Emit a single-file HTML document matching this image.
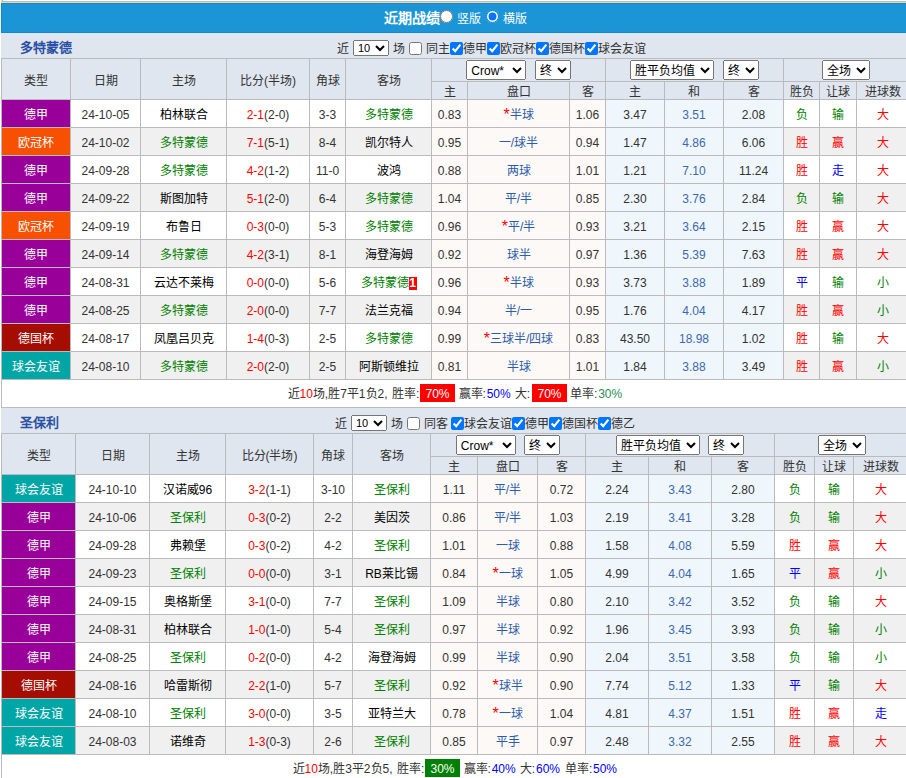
<!DOCTYPE html>
<html lang="zh-CN">
<head>
<meta charset="utf-8">
<title>近期战绩</title>
<style>
html,body{margin:0;padding:0;background:#fff;}
body{font-family:"Liberation Sans",sans-serif;font-size:12px;color:#333;}
#page{position:relative;width:906px;height:778px;overflow:hidden;background:#fff;}
#topbox{position:absolute;left:2px;top:0;width:910px;height:2px;border-left:1px solid #bbb;border-bottom:1px solid #bbb;box-sizing:border-box;background:#fff;}
#topline{position:absolute;left:1px;top:0;width:910px;height:3px;border-left:1px solid #f0d6a3;border-bottom:1px solid #f0d6a3;box-sizing:border-box;}
#bar{position:absolute;left:1px;top:3px;width:905px;height:30px;background:#1b95d6;border:1px solid #0c8bd4;border-right:0;box-sizing:border-box;color:#fff;}
#bar .ttl{position:absolute;right:466px;top:6px;font-size:14px;line-height:16px;white-space:nowrap;}
#bar input{position:absolute;margin:0;width:13px;height:13px;}
#bar .rd1{left:438px;top:6px;}
#bar .rd2{left:484px;top:6px;}
#bar span{position:absolute;top:8px;line-height:14px;white-space:nowrap;}
#bar .l1{left:455px;}
#bar .l2{left:501px;}
.band{position:absolute;left:1px;width:905px;height:25px;background:#dfe6ef;}
#band1{top:33px;}
#band2{top:408px;}
.tn{position:absolute;left:19px;top:7px;font-size:13px;line-height:15px;color:#2a50a4;white-space:nowrap;}
.ft{position:absolute;top:9px;line-height:14px;white-space:nowrap;color:#333;}
select{font-family:"Liberation Sans",sans-serif;font-size:12px;color:#000;margin:0;padding:1px 0 0 0;height:20px;box-sizing:border-box;vertical-align:middle;}
.sn{position:absolute;top:7px;width:36px;height:16px;font-size:11px;padding:0;}
.s1{width:60px;}
.s2{width:36px;margin-left:5px;}
.s3{width:84px;}
.s4{width:48px;}
.cb{position:absolute;top:9px;margin:0;width:13px;height:13px;}
.tw{position:absolute;left:1px;}
#tw1{top:58px;}
#tw2{top:433px;}
table.tb{border-collapse:separate;border-spacing:0;table-layout:fixed;border-left:1px solid #bbb;border-top:1px solid #bbb;}
.tb th,.tb td{padding:0;margin:0;border-right:1px solid #bbb;border-bottom:1px solid #bbb;text-align:center;font-weight:normal;white-space:nowrap;overflow:hidden;box-sizing:border-box;}
.tb th{background:#dfe6ef;color:#333;}
.tb tr.h1 th{height:23px;}
.tb tr.h2 th{height:18px;line-height:14px;padding-top:3px;}
.tb td{height:28px;line-height:23px;padding-top:4px;}
tr.o td{background:#fff;}
tr.e td{background:#f0f0f0;}
.tb td.p{background:#fdf9f6;}
.tb td.q{background:#f0f7fc;}
.tb td.pk{color:#2a5caa;}
.tb td.dr{color:#3c68b0;}
.tb td.ty{color:#fff;}
.tb td.t-dj{background:#990099;}
.tb td.t-og{background:#f75000;}
.tb td.t-dg{background:#a50d00;}
.tb td.t-qh{background:#00a5a5;}
.r{color:#ff0000;}
.g{color:#008000;}
.b{color:#0000ff;}
.k{color:#000;}
td.g{color:#008000;}
.rc{font-style:normal;background:#ff0000;color:#fff;font-weight:bold;padding:0;width:8px;text-align:center;line-height:13px;display:inline-block;}
.as{color:#ff0000;font-size:16px;line-height:0;vertical-align:-1px;}
.sum{position:absolute;left:1px;width:905px;height:28px;box-sizing:border-box;background:#fff;color:#333;border-left:1px solid #bbb;border-bottom:1px solid #bbb;}
#sum1{top:380px;}
#sum2{top:755px;}
.st{position:absolute;top:6px;line-height:16px;white-space:nowrap;margin-left:-1px;}
.bx{position:absolute;top:4px;color:#fff;height:18px;line-height:20px;overflow:hidden;width:35px;text-align:center;margin-left:-1px;}
.br{background:#ff0000;}
.bg{background:#008000;}
.g2{color:#2e8b57;}

</style>
</head>
<body>
<div id="page">
<div id="topbox"></div>
<div id="topline"></div>
<div id="bar"><b class="ttl">近期战绩</b><input type="radio" name="v" class="rd1"><span class="l1">竖版</span><input type="radio" name="v" class="rd2" checked><span class="l2">横版</span></div>

<div class="band" id="band1">
<b class="tn">多特蒙德</b>
<span class="ft" style="left:335.5px">近</span><select class="sn" style="left:352px"><option>10</option></select><span class="ft" style="left:392px">场</span><input type="checkbox" class="cb" style="left:408px"><span class="ft" style="left:425px">同主</span><input type="checkbox" class="cb" style="left:449px" checked><span class="ft" style="left:462px">德甲</span><input type="checkbox" class="cb" style="left:486px" checked><span class="ft" style="left:499px">欧冠杯</span><input type="checkbox" class="cb" style="left:535px" checked><span class="ft" style="left:548px">德国杯</span><input type="checkbox" class="cb" style="left:584px" checked><span class="ft" style="left:597px">球会友谊</span>
</div>
<div class="tw" id="tw1">
<table class="tb" style="width:907px">
<colgroup><col style="width:69px"><col style="width:70px"><col style="width:86px"><col style="width:83px"><col style="width:36px"><col style="width:86px"><col style="width:36px"><col style="width:102px"><col style="width:36px"><col style="width:59px"><col style="width:59px"><col style="width:60px"><col style="width:36px"><col style="width:37px"><col style="width:52px"></colgroup>
<tr class="h1"><th rowspan="2">类型</th><th rowspan="2">日期</th><th rowspan="2">主场</th><th rowspan="2">比分(半场)</th><th rowspan="2">角球</th><th rowspan="2">客场</th><th colspan="3"><select class="s1"><option>Crow*</option></select> <select class="s2"><option>终</option></select></th><th colspan="3"><select class="s3"><option>胜平负均值</option></select> <select class="s2"><option>终</option></select></th><th colspan="3"><select class="s4"><option>全场</option></select></th></tr>
<tr class="h2"><th>主</th><th>盘口</th><th>客</th><th>主</th><th>和</th><th>客</th><th>胜负</th><th>让球</th><th>进球数</th></tr>
<tr class="o"><td class="ty t-dj">德甲</td><td>24-10-05</td><td><span class="k">柏林联合</span></td><td><span class="r">2-1</span>(2-0)</td><td>3-3</td><td><span class="g">多特蒙德</span></td><td class="p">0.83</td><td class="p pk"><span class="as">*</span>半球</td><td class="p">1.06</td><td class="q">3.47</td><td class="q dr">3.51</td><td class="q">2.08</td><td class="g">负</td><td class="g">输</td><td class="r">大</td></tr>
<tr class="e"><td class="ty t-og">欧冠杯</td><td>24-10-02</td><td><span class="g">多特蒙德</span></td><td><span class="r">7-1</span>(5-1)</td><td>8-4</td><td><span class="k">凯尔特人</span></td><td class="p">0.95</td><td class="p pk">一/球半</td><td class="p">0.94</td><td class="q">1.47</td><td class="q dr">4.86</td><td class="q">6.06</td><td class="r">胜</td><td class="r">赢</td><td class="r">大</td></tr>
<tr class="o"><td class="ty t-dj">德甲</td><td>24-09-28</td><td><span class="g">多特蒙德</span></td><td><span class="r">4-2</span>(1-2)</td><td>11-0</td><td><span class="k">波鸿</span></td><td class="p">0.88</td><td class="p pk">两球</td><td class="p">1.01</td><td class="q">1.21</td><td class="q dr">7.10</td><td class="q">11.24</td><td class="r">胜</td><td class="b">走</td><td class="r">大</td></tr>
<tr class="e"><td class="ty t-dj">德甲</td><td>24-09-22</td><td><span class="k">斯图加特</span></td><td><span class="r">5-1</span>(2-0)</td><td>6-4</td><td><span class="g">多特蒙德</span></td><td class="p">1.04</td><td class="p pk">平/半</td><td class="p">0.85</td><td class="q">2.30</td><td class="q dr">3.76</td><td class="q">2.84</td><td class="g">负</td><td class="g">输</td><td class="r">大</td></tr>
<tr class="o"><td class="ty t-og">欧冠杯</td><td>24-09-19</td><td><span class="k">布鲁日</span></td><td><span class="r">0-3</span>(0-0)</td><td>5-3</td><td><span class="g">多特蒙德</span></td><td class="p">0.96</td><td class="p pk"><span class="as">*</span>平/半</td><td class="p">0.93</td><td class="q">3.21</td><td class="q dr">3.64</td><td class="q">2.15</td><td class="r">胜</td><td class="r">赢</td><td class="r">大</td></tr>
<tr class="e"><td class="ty t-dj">德甲</td><td>24-09-14</td><td><span class="g">多特蒙德</span></td><td><span class="r">4-2</span>(3-1)</td><td>8-1</td><td><span class="k">海登海姆</span></td><td class="p">0.92</td><td class="p pk">球半</td><td class="p">0.97</td><td class="q">1.36</td><td class="q dr">5.39</td><td class="q">7.63</td><td class="r">胜</td><td class="r">赢</td><td class="r">大</td></tr>
<tr class="o"><td class="ty t-dj">德甲</td><td>24-08-31</td><td><span class="k">云达不莱梅</span></td><td><span class="r">0-0</span>(0-0)</td><td>5-6</td><td><span class="g">多特蒙德</span><i class="rc">1</i></td><td class="p">0.96</td><td class="p pk"><span class="as">*</span>半球</td><td class="p">0.93</td><td class="q">3.73</td><td class="q dr">3.88</td><td class="q">1.89</td><td class="b">平</td><td class="g">输</td><td class="g">小</td></tr>
<tr class="e"><td class="ty t-dj">德甲</td><td>24-08-25</td><td><span class="g">多特蒙德</span></td><td><span class="r">2-0</span>(0-0)</td><td>7-7</td><td><span class="k">法兰克福</span></td><td class="p">0.94</td><td class="p pk">半/一</td><td class="p">0.95</td><td class="q">1.76</td><td class="q dr">4.04</td><td class="q">4.17</td><td class="r">胜</td><td class="r">赢</td><td class="g">小</td></tr>
<tr class="o"><td class="ty t-dg">德国杯</td><td>24-08-17</td><td><span class="k">凤凰吕贝克</span></td><td><span class="r">1-4</span>(0-3)</td><td>2-5</td><td><span class="g">多特蒙德</span></td><td class="p">0.99</td><td class="p pk"><span class="as">*</span>三球半/四球</td><td class="p">0.83</td><td class="q">43.50</td><td class="q dr">18.98</td><td class="q">1.02</td><td class="r">胜</td><td class="g">输</td><td class="r">大</td></tr>
<tr class="e"><td class="ty t-qh">球会友谊</td><td>24-08-10</td><td><span class="g">多特蒙德</span></td><td><span class="r">2-0</span>(2-0)</td><td>2-5</td><td><span class="k">阿斯顿维拉</span></td><td class="p">0.81</td><td class="p pk">半球</td><td class="p">1.01</td><td class="q">1.84</td><td class="q dr">3.88</td><td class="q">3.49</td><td class="r">胜</td><td class="r">赢</td><td class="g">小</td></tr>
</table>
</div>
<div class="sum" id="sum1"><span class="st" style="left:286.5px">近<span class="r">10</span>场,胜7平1负2,</span><span class="st" style="left:391px">胜率:</span><span class="bx br" style="left:419px">70%</span><span class="st" style="left:457.5px">赢率:</span><span class="st" style="left:485.7px"><span class="b">50%</span></span><span class="st" style="left:513.7px">大:</span><span class="bx br" style="left:531px">70%</span><span class="st" style="left:569px">单率:</span><span class="st" style="left:597.2px"><span class="g2">30%</span></span></div>

<div class="band" id="band2">
<b class="tn">圣保利</b>
<span class="ft" style="left:333.5px">近</span><select class="sn" style="left:350px"><option>10</option></select><span class="ft" style="left:390px">场</span><input type="checkbox" class="cb" style="left:406px"><span class="ft" style="left:423px">同客</span><input type="checkbox" class="cb" style="left:450px" checked><span class="ft" style="left:463px">球会友谊</span><input type="checkbox" class="cb" style="left:511px" checked><span class="ft" style="left:524px">德甲</span><input type="checkbox" class="cb" style="left:548px" checked><span class="ft" style="left:561px">德国杯</span><input type="checkbox" class="cb" style="left:597px" checked><span class="ft" style="left:610px">德乙</span>
</div>
<div class="tw" id="tw2">
<table class="tb" style="width:907px">
<colgroup><col style="width:74px"><col style="width:74px"><col style="width:76px"><col style="width:88px"><col style="width:39px"><col style="width:78px"><col style="width:47px"><col style="width:60px"><col style="width:48px"><col style="width:63px"><col style="width:63px"><col style="width:63px"><col style="width:40px"><col style="width:39px"><col style="width:55px"></colgroup>
<tr class="h1"><th rowspan="2">类型</th><th rowspan="2">日期</th><th rowspan="2">主场</th><th rowspan="2">比分(半场)</th><th rowspan="2">角球</th><th rowspan="2">客场</th><th colspan="3"><select class="s1"><option>Crow*</option></select> <select class="s2"><option>终</option></select></th><th colspan="3"><select class="s3"><option>胜平负均值</option></select> <select class="s2"><option>终</option></select></th><th colspan="3"><select class="s4"><option>全场</option></select></th></tr>
<tr class="h2"><th>主</th><th>盘口</th><th>客</th><th>主</th><th>和</th><th>客</th><th>胜负</th><th>让球</th><th>进球数</th></tr>
<tr class="o"><td class="ty t-qh">球会友谊</td><td>24-10-10</td><td><span class="k">汉诺威96</span></td><td><span class="r">3-2</span>(1-1)</td><td>3-10</td><td><span class="g">圣保利</span></td><td class="p">1.11</td><td class="p pk">平/半</td><td class="p">0.72</td><td class="q">2.24</td><td class="q dr">3.43</td><td class="q">2.80</td><td class="g">负</td><td class="g">输</td><td class="r">大</td></tr>
<tr class="e"><td class="ty t-dj">德甲</td><td>24-10-06</td><td><span class="g">圣保利</span></td><td><span class="r">0-3</span>(0-2)</td><td>2-2</td><td><span class="k">美因茨</span></td><td class="p">0.86</td><td class="p pk">平/半</td><td class="p">1.03</td><td class="q">2.19</td><td class="q dr">3.41</td><td class="q">3.28</td><td class="g">负</td><td class="g">输</td><td class="r">大</td></tr>
<tr class="o"><td class="ty t-dj">德甲</td><td>24-09-28</td><td><span class="k">弗赖堡</span></td><td><span class="r">0-3</span>(0-2)</td><td>4-2</td><td><span class="g">圣保利</span></td><td class="p">1.01</td><td class="p pk">一球</td><td class="p">0.88</td><td class="q">1.58</td><td class="q dr">4.08</td><td class="q">5.59</td><td class="r">胜</td><td class="r">赢</td><td class="r">大</td></tr>
<tr class="e"><td class="ty t-dj">德甲</td><td>24-09-23</td><td><span class="g">圣保利</span></td><td><span class="r">0-0</span>(0-0)</td><td>3-1</td><td><span class="k">RB莱比锡</span></td><td class="p">0.84</td><td class="p pk"><span class="as">*</span>一球</td><td class="p">1.05</td><td class="q">4.99</td><td class="q dr">4.04</td><td class="q">1.65</td><td class="b">平</td><td class="r">赢</td><td class="g">小</td></tr>
<tr class="o"><td class="ty t-dj">德甲</td><td>24-09-15</td><td><span class="k">奥格斯堡</span></td><td><span class="r">3-1</span>(0-0)</td><td>7-7</td><td><span class="g">圣保利</span></td><td class="p">1.09</td><td class="p pk">半球</td><td class="p">0.80</td><td class="q">2.10</td><td class="q dr">3.42</td><td class="q">3.52</td><td class="g">负</td><td class="g">输</td><td class="r">大</td></tr>
<tr class="e"><td class="ty t-dj">德甲</td><td>24-08-31</td><td><span class="k">柏林联合</span></td><td><span class="r">1-0</span>(1-0)</td><td>5-4</td><td><span class="g">圣保利</span></td><td class="p">0.97</td><td class="p pk">半球</td><td class="p">0.92</td><td class="q">1.96</td><td class="q dr">3.45</td><td class="q">3.93</td><td class="g">负</td><td class="g">输</td><td class="g">小</td></tr>
<tr class="o"><td class="ty t-dj">德甲</td><td>24-08-25</td><td><span class="g">圣保利</span></td><td><span class="r">0-2</span>(0-0)</td><td>4-2</td><td><span class="k">海登海姆</span></td><td class="p">0.99</td><td class="p pk">半球</td><td class="p">0.90</td><td class="q">2.04</td><td class="q dr">3.51</td><td class="q">3.58</td><td class="g">负</td><td class="g">输</td><td class="g">小</td></tr>
<tr class="e"><td class="ty t-dg">德国杯</td><td>24-08-16</td><td><span class="k">哈雷斯彻</span></td><td><span class="r">2-2</span>(1-0)</td><td>5-7</td><td><span class="g">圣保利</span></td><td class="p">0.92</td><td class="p pk"><span class="as">*</span>球半</td><td class="p">0.90</td><td class="q">7.74</td><td class="q dr">5.12</td><td class="q">1.33</td><td class="b">平</td><td class="g">输</td><td class="r">大</td></tr>
<tr class="o"><td class="ty t-qh">球会友谊</td><td>24-08-10</td><td><span class="g">圣保利</span></td><td><span class="r">3-0</span>(0-0)</td><td>3-5</td><td><span class="k">亚特兰大</span></td><td class="p">0.78</td><td class="p pk"><span class="as">*</span>一球</td><td class="p">1.04</td><td class="q">4.81</td><td class="q dr">4.37</td><td class="q">1.51</td><td class="r">胜</td><td class="r">赢</td><td class="b">走</td></tr>
<tr class="e"><td class="ty t-qh">球会友谊</td><td>24-08-03</td><td><span class="k">诺维奇</span></td><td><span class="r">1-3</span>(0-3)</td><td>2-6</td><td><span class="g">圣保利</span></td><td class="p">0.85</td><td class="p pk">平手</td><td class="p">0.97</td><td class="q">2.48</td><td class="q dr">3.32</td><td class="q">2.55</td><td class="r">胜</td><td class="r">赢</td><td class="r">大</td></tr>
</table>
</div>
<div class="sum" id="sum2"><span class="st" style="left:291.5px">近<span class="r">10</span>场,胜3平2负5,</span><span class="st" style="left:396px">胜率:</span><span class="bx bg" style="left:424px">30%</span><span class="st" style="left:462.5px">赢率:</span><span class="st" style="left:490.7px"><span class="b">40%</span></span><span class="st" style="left:518.7px">大:</span><span class="st" style="left:535px"><span class="b">60%</span></span><span class="st" style="left:564px">单率:</span><span class="st" style="left:592px"><span class="b">50%</span></span></div>
</div>
</body>
</html>
